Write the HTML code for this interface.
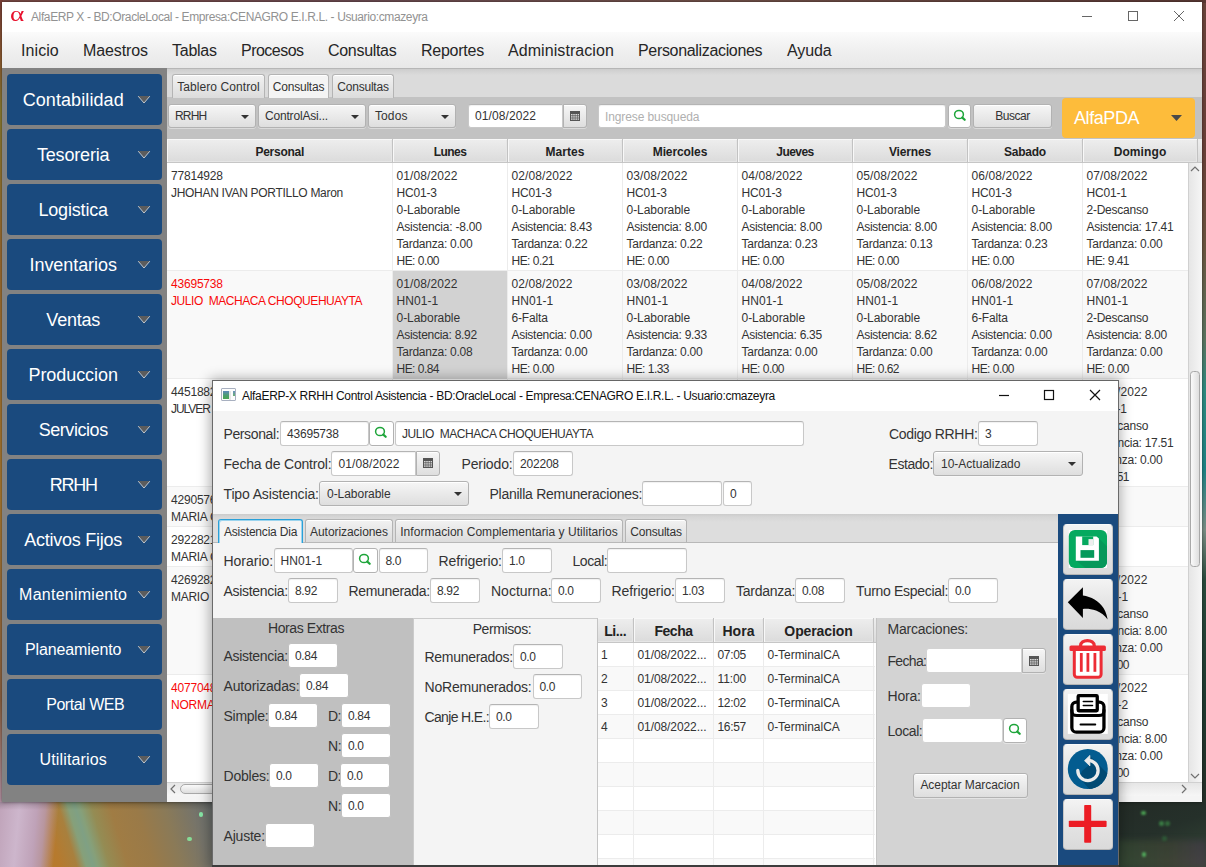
<!DOCTYPE html>
<html><head><meta charset="utf-8"><title>AlfaERP X</title>
<style>
html,body{margin:0;padding:0;}
body{width:1206px;height:867px;overflow:hidden;position:relative;background:#3a3a36;font-family:"Liberation Sans",sans-serif;}
div,svg.a{position:absolute;box-sizing:border-box;}
.t{white-space:pre;overflow:visible;}
.tf{background:#fff;border:1px solid #c8c8c8;border-top-color:#b4b4b4;border-radius:3px;box-shadow:inset 0 1px 1px rgba(0,0,0,.06);}
.btn{background:linear-gradient(#f6f6f6,#dedede);border:1px solid #b2b2b2;border-radius:3px;box-shadow:inset 0 1px 0 #fff,0 1px 0 rgba(255,255,255,.4);}
.sb{background:#1a4a7e;border-radius:4px;}
.hdr{background:linear-gradient(#eeeeee,#dbdbdb);border-right:1px solid #c2c2c2;border-bottom:1px solid #c6c6c6;box-shadow:inset 1px 1px 0 #f8f8f8,inset -1px -1px 0 #e6e6e6;}
</style></head><body>

<div style="left:0px;top:0px;width:1206px;height:867px;background:linear-gradient(180deg,#6a443c 0,#6a4038 150px,#6a5640 250px,#5a7460 340px,#2e8a80 390px,#1f8284 470px,#7a8c84 530px,#2a4a3c 580px,#1f3a30 700px,#263028 800px);"></div>
<div style="left:0px;top:0px;width:1206px;height:3px;background:linear-gradient(90deg,#7a4a44,#6a4a50 30%,#705048 60%,#5a3834);"></div>
<div style="left:0px;top:0px;width:3px;height:867px;background:linear-gradient(180deg,#7a4038 0,#8a5a30 60px,#8a7a30 110px,#9a6a30 250px,#a87830 500px,#8a6040 700px,#b090a0 800px);"></div>
<div style="left:0px;top:802px;width:214px;height:65px;background:linear-gradient(73deg,#b87828 0,#b67a2e 26%,#a8803e 33%,#86a07a 37%,#7fa084 40%,#86a07a 42%,#948c54 47%,#a07c44 55%,#9a7a48 66%,#8a7a58 78%,#76746a 90%,#666c6c 100%);"></div>
<div style="left:0px;top:802px;width:214px;height:65px;background:linear-gradient(95.4deg,#c0a4ba 0,#cdb6cc 9%,#bfa2b8 17%,#b8969e 21%,rgba(182,130,90,0) 27%);"></div>
<div style="left:0px;top:802px;width:214px;height:65px;background:linear-gradient(180deg,rgba(0,0,0,.18),rgba(0,0,0,0) 8px);"></div>
<div style="left:1118px;top:802px;width:88px;height:65px;background:linear-gradient(160deg,#232b26 0,#25302a 45%,#2c3a30 70%,#3c4438 100%);"></div>
<div style="left:1118px;top:840px;width:88px;height:27px;background:linear-gradient(90deg,rgba(70,100,60,.35),rgba(90,80,60,.3) 60%,rgba(90,60,100,.35));filter:blur(3px);"></div>
<div style="left:1141px;top:810.5px;width:4.5px;height:4.5px;background:#4fae58;border-radius:50%;opacity:0.9;filter:blur(1px);"></div>
<div style="left:1159px;top:821px;width:4.5px;height:4.5px;background:#3f8f4a;border-radius:50%;opacity:0.8;filter:blur(1px);"></div>
<div style="left:1165px;top:821px;width:4.5px;height:4.5px;background:#3a8444;border-radius:50%;opacity:0.7;filter:blur(1px);"></div>
<div style="left:1162px;top:836px;width:4.5px;height:4.5px;background:#2f6e3c;border-radius:50%;opacity:0.6;filter:blur(1px);"></div>
<div style="left:1141.5px;top:852px;width:4.5px;height:4.5px;background:#55b860;border-radius:50%;opacity:0.9;filter:blur(1px);"></div>
<div style="left:198.5px;top:812px;width:4.5px;height:4.5px;background:#86e6a6;border-radius:50%;filter:blur(.7px);"></div>
<div style="left:187px;top:836.5px;width:4.5px;height:4.5px;background:#86dc96;border-radius:50%;filter:blur(.7px);"></div>
<div style="left:2px;top:2px;width:1200px;height:800px;background:#fff;box-shadow:0 0 3px rgba(0,0,0,.5);"></div>
<div class="t" style="left:10.200px;top:2px;height:24px;line-height:24px;font-size:21px;color:#e8112d;transform:scaleX(1.3);transform-origin:0 0;font-family:'Liberation Serif',serif;">α</div>
<div class="t" style="left:31px;top:2px;height:30px;line-height:30px;font-size:12px;color:#929292;letter-spacing:-0.388px;">AlfaERP X - BD:OracleLocal - Empresa:CENAGRO E.I.R.L. - Usuario:cmazeyra</div>
<svg class="a" style="left:1076px;top:6px" width="120" height="22" viewBox="0 0 120 22"><g stroke="#666" stroke-width="1" fill="none"><path d="M6 10.5 H16"/><rect x="52.5" y="5.5" width="9" height="9"/><path d="M98 5 L108 15 M108 5 L98 15"/></g></svg>
<div style="left:2px;top:32px;width:1200px;height:36px;background:linear-gradient(#fbfbfb,#f5f5f5 25%,#eeeeee 60%,#e8e8e8);"></div>
<div class="t" style="left:21px;top:33px;height:36px;line-height:36px;font-size:16px;color:#262626;letter-spacing:0.079px;">Inicio</div>
<div class="t" style="left:83px;top:33px;height:36px;line-height:36px;font-size:16px;color:#262626;letter-spacing:-0.123px;">Maestros</div>
<div class="t" style="left:172px;top:33px;height:36px;line-height:36px;font-size:16px;color:#262626;letter-spacing:-0.253px;">Tablas</div>
<div class="t" style="left:241px;top:33px;height:36px;line-height:36px;font-size:16px;color:#262626;letter-spacing:-0.511px;">Procesos</div>
<div class="t" style="left:328px;top:33px;height:36px;line-height:36px;font-size:16px;color:#262626;letter-spacing:-0.305px;">Consultas</div>
<div class="t" style="left:421px;top:33px;height:36px;line-height:36px;font-size:16px;color:#262626;letter-spacing:-0.256px;">Reportes</div>
<div class="t" style="left:508px;top:33px;height:36px;line-height:36px;font-size:16px;color:#262626;letter-spacing:0.071px;">Administracion</div>
<div class="t" style="left:638px;top:33px;height:36px;line-height:36px;font-size:16px;color:#262626;letter-spacing:-0.330px;">Personalizaciones</div>
<div class="t" style="left:787px;top:33px;height:36px;line-height:36px;font-size:16px;color:#262626;letter-spacing:-0.083px;">Ayuda</div>
<div style="left:2px;top:68px;width:165px;height:734px;background:#828282;"></div>
<div class="sb" style="left:7px;top:74px;width:155px;height:51px;"></div>
<div class="t" style="left:22.6409px;top:75px;height:51px;line-height:51px;font-size:18px;color:#fff;letter-spacing:0.087px;">Contabilidad</div>
<svg class="a" style="left:137px;top:95px" width="14" height="10" viewBox="0 0 14 10"><path d="M1.500 1 H12.500 L7 7.500 Z" fill="#5c5c5c"/><path d="M1.200 1.200 L7 8 L12.800 1.200" fill="none" stroke="#cfcfcf" stroke-width=".95"/></svg>
<div class="sb" style="left:7px;top:129px;width:155px;height:51px;"></div>
<div class="t" style="left:36.9627px;top:130px;height:51px;line-height:51px;font-size:18px;color:#fff;letter-spacing:-0.173px;">Tesoreria</div>
<svg class="a" style="left:137px;top:150px" width="14" height="10" viewBox="0 0 14 10"><path d="M1.500 1 H12.500 L7 7.500 Z" fill="#5c5c5c"/><path d="M1.200 1.200 L7 8 L12.800 1.200" fill="none" stroke="#cfcfcf" stroke-width=".95"/></svg>
<div class="sb" style="left:7px;top:184px;width:155px;height:51px;"></div>
<div class="t" style="left:38.4349px;top:185px;height:51px;line-height:51px;font-size:18px;color:#fff;letter-spacing:-0.168px;">Logistica</div>
<svg class="a" style="left:137px;top:205px" width="14" height="10" viewBox="0 0 14 10"><path d="M1.500 1 H12.500 L7 7.500 Z" fill="#5c5c5c"/><path d="M1.200 1.200 L7 8 L12.800 1.200" fill="none" stroke="#cfcfcf" stroke-width=".95"/></svg>
<div class="sb" style="left:7px;top:239px;width:155px;height:51px;"></div>
<div class="t" style="left:29.5711px;top:240px;height:51px;line-height:51px;font-size:18px;color:#fff;letter-spacing:-0.072px;">Inventarios</div>
<svg class="a" style="left:137px;top:260px" width="14" height="10" viewBox="0 0 14 10"><path d="M1.500 1 H12.500 L7 7.500 Z" fill="#5c5c5c"/><path d="M1.200 1.200 L7 8 L12.800 1.200" fill="none" stroke="#cfcfcf" stroke-width=".95"/></svg>
<div class="sb" style="left:7px;top:294px;width:155px;height:51px;"></div>
<div class="t" style="left:46.3626px;top:295px;height:51px;line-height:51px;font-size:18px;color:#fff;letter-spacing:-0.229px;">Ventas</div>
<svg class="a" style="left:137px;top:315px" width="14" height="10" viewBox="0 0 14 10"><path d="M1.500 1 H12.500 L7 7.500 Z" fill="#5c5c5c"/><path d="M1.200 1.200 L7 8 L12.800 1.200" fill="none" stroke="#cfcfcf" stroke-width=".95"/></svg>
<div class="sb" style="left:7px;top:349px;width:155px;height:51px;"></div>
<div class="t" style="left:28.512px;top:350px;height:51px;line-height:51px;font-size:18px;color:#fff;letter-spacing:-0.068px;">Produccion</div>
<svg class="a" style="left:137px;top:370px" width="14" height="10" viewBox="0 0 14 10"><path d="M1.500 1 H12.500 L7 7.500 Z" fill="#5c5c5c"/><path d="M1.200 1.200 L7 8 L12.800 1.200" fill="none" stroke="#cfcfcf" stroke-width=".95"/></svg>
<div class="sb" style="left:7px;top:404px;width:155px;height:51px;"></div>
<div class="t" style="left:38.6678px;top:405px;height:51px;line-height:51px;font-size:18px;color:#fff;letter-spacing:-0.439px;">Servicios</div>
<svg class="a" style="left:137px;top:425px" width="14" height="10" viewBox="0 0 14 10"><path d="M1.500 1 H12.500 L7 7.500 Z" fill="#5c5c5c"/><path d="M1.200 1.200 L7 8 L12.800 1.200" fill="none" stroke="#cfcfcf" stroke-width=".95"/></svg>
<div class="sb" style="left:7px;top:459px;width:155px;height:51px;"></div>
<div class="t" style="left:49.6365px;top:460px;height:51px;line-height:51px;font-size:18px;color:#fff;letter-spacing:-1.217px;">RRHH</div>
<svg class="a" style="left:137px;top:480px" width="14" height="10" viewBox="0 0 14 10"><path d="M1.500 1 H12.500 L7 7.500 Z" fill="#5c5c5c"/><path d="M1.200 1.200 L7 8 L12.800 1.200" fill="none" stroke="#cfcfcf" stroke-width=".95"/></svg>
<div class="sb" style="left:7px;top:514px;width:155px;height:51px;"></div>
<div class="t" style="left:24.2977px;top:515px;height:51px;line-height:51px;font-size:18px;color:#fff;letter-spacing:-0.247px;">Activos Fijos</div>
<svg class="a" style="left:137px;top:535px" width="14" height="10" viewBox="0 0 14 10"><path d="M1.500 1 H12.500 L7 7.500 Z" fill="#5c5c5c"/><path d="M1.200 1.200 L7 8 L12.800 1.200" fill="none" stroke="#cfcfcf" stroke-width=".95"/></svg>
<div class="sb" style="left:7px;top:569px;width:155px;height:51px;"></div>
<div class="t" style="left:19.1219px;top:569px;height:51px;line-height:51px;font-size:16px;color:#fff;letter-spacing:0.247px;">Mantenimiento</div>
<svg class="a" style="left:137px;top:590px" width="14" height="10" viewBox="0 0 14 10"><path d="M1.500 1 H12.500 L7 7.500 Z" fill="#5c5c5c"/><path d="M1.200 1.200 L7 8 L12.800 1.200" fill="none" stroke="#cfcfcf" stroke-width=".95"/></svg>
<div class="sb" style="left:7px;top:624px;width:155px;height:51px;"></div>
<div class="t" style="left:24.993px;top:624px;height:51px;line-height:51px;font-size:16px;color:#fff;letter-spacing:-0.119px;">Planeamiento</div>
<svg class="a" style="left:137px;top:645px" width="14" height="10" viewBox="0 0 14 10"><path d="M1.500 1 H12.500 L7 7.500 Z" fill="#5c5c5c"/><path d="M1.200 1.200 L7 8 L12.800 1.200" fill="none" stroke="#cfcfcf" stroke-width=".95"/></svg>
<div class="sb" style="left:7px;top:679px;width:155px;height:51px;"></div>
<div class="t" style="left:46.2391px;top:679px;height:51px;line-height:51px;font-size:16px;color:#fff;letter-spacing:-0.477px;">Portal WEB</div>
<div class="sb" style="left:7px;top:734px;width:155px;height:51px;"></div>
<div class="t" style="left:39.5984px;top:734px;height:51px;line-height:51px;font-size:16px;color:#fff;letter-spacing:0.129px;">Utilitarios</div>
<svg class="a" style="left:137px;top:755px" width="14" height="10" viewBox="0 0 14 10"><path d="M1.500 1 H12.500 L7 7.500 Z" fill="#5c5c5c"/><path d="M1.200 1.200 L7 8 L12.800 1.200" fill="none" stroke="#cfcfcf" stroke-width=".95"/></svg>
<div style="left:167px;top:68px;width:1035px;height:30px;background:linear-gradient(#b4b4b4 0,#b8b8b8 1px,#cecece 1.500px,#dbdbdb 7px,#dbdbdb);"></div>
<div style="left:167px;top:97px;width:1035px;height:42px;background:#c2c2c2;"></div>
<div style="left:172px;top:74px;width:93px;height:24px;background:linear-gradient(#f2f2f2,#dcdcdc);border:1px solid #b4b4b4;border-bottom:none;border-radius:3px 3px 0 0;box-shadow:inset 0 1px 0 #fff;"></div>
<div class="t" style="left:172px;top:76px;height:23px;line-height:23px;font-size:12px;color:#333;letter-spacing:0.078px;width:93px;text-align:center;">Tablero Control</div>
<div style="left:268px;top:74px;width:61px;height:24px;background:#f4f4f4;border:1px solid #b4b4b4;border-bottom:none;border-radius:3px 3px 0 0;box-shadow:inset 0 1px 0 #fff;"></div>
<div class="t" style="left:268px;top:76px;height:23px;line-height:23px;font-size:12px;color:#333;letter-spacing:-0.228px;width:61px;text-align:center;">Consultas</div>
<div style="left:332px;top:74px;width:62px;height:24px;background:linear-gradient(#f2f2f2,#dcdcdc);border:1px solid #b4b4b4;border-bottom:none;border-radius:3px 3px 0 0;box-shadow:inset 0 1px 0 #fff;"></div>
<div class="t" style="left:332px;top:76px;height:23px;line-height:23px;font-size:12px;color:#333;letter-spacing:-0.228px;width:62px;text-align:center;">Consultas</div>
<div class="btn" style="left:167.5px;top:104px;width:88.5px;height:24px;"></div>
<div class="t" style="left:175px;top:104px;height:24px;line-height:24px;font-size:12px;color:#333;letter-spacing:-0.811px;">RRHH</div>
<svg class="a" style="left:240.5px;top:114.5px" width="8" height="4" viewBox="0 0 8 4"><path d="M0 0 H8 L4.0 4 Z" fill="#333"/></svg>
<div class="btn" style="left:258px;top:104px;width:108px;height:24px;"></div>
<div class="t" style="left:265px;top:104px;height:24px;line-height:24px;font-size:12px;color:#333;letter-spacing:-0.184px;">ControlAsi...</div>
<svg class="a" style="left:350.5px;top:114.5px" width="8" height="4" viewBox="0 0 8 4"><path d="M0 0 H8 L4.0 4 Z" fill="#333"/></svg>
<div class="btn" style="left:368px;top:104px;width:88px;height:24px;"></div>
<div class="t" style="left:375px;top:104px;height:24px;line-height:24px;font-size:12px;color:#333;letter-spacing:0.095px;">Todos</div>
<svg class="a" style="left:440.5px;top:114.5px" width="8" height="4" viewBox="0 0 8 4"><path d="M0 0 H8 L4.0 4 Z" fill="#333"/></svg>
<div class="tf" style="left:467.5px;top:104px;width:95px;height:24px;border-radius:3px 0 0 3px;"></div>
<div class="btn" style="left:562.5px;top:104px;width:24px;height:24px;border-radius:0 3px 3px 0;"></div>
<svg class="a" style="left:569.5px;top:111px" width="10" height="10" viewBox="0 0 10 10"><rect x="0" y="0" width="10" height="10" fill="#555"/><g fill="#d8d8d8"><rect x="1" y="3" width="1.6" height="1.4"/><rect x="3.2" y="3" width="1.6" height="1.4"/><rect x="5.4" y="3" width="1.6" height="1.4"/><rect x="7.6" y="3" width="1.4" height="1.4"/><rect x="1" y="5.2" width="1.6" height="1.4"/><rect x="3.2" y="5.2" width="1.6" height="1.4"/><rect x="5.4" y="5.2" width="1.6" height="1.4"/><rect x="7.6" y="5.2" width="1.4" height="1.4"/><rect x="1" y="7.4" width="1.6" height="1.4"/><rect x="3.2" y="7.4" width="1.6" height="1.4"/><rect x="5.4" y="7.4" width="1.6" height="1.4"/><rect x="7.6" y="7.4" width="1.4" height="1.4"/></g></svg>
<div class="t" style="left:475px;top:104.3px;height:24px;line-height:24px;font-size:12px;color:#333;letter-spacing:0.103px;">01/08/2022</div>
<div class="tf" style="left:598px;top:104px;width:348px;height:24px;"></div>
<div class="t" style="left:605px;top:105px;height:24px;line-height:24px;font-size:12px;color:#b0b0b0;letter-spacing:-0.107px;">Ingrese busqueda</div>
<div class="btn" style="left:948px;top:104px;width:23px;height:24px;background:#fff;"></div>
<svg class="a" style="left:948px;top:104px" width="25" height="25" viewBox="0 0 25 25"><ellipse cx="11" cy="10.500" rx="4.400" ry="4.100" fill="none" stroke="#1ea53a" stroke-width="1.500"/><path d="M14.300 13.600 L16.700 15.800" stroke="#1ea53a" stroke-width="2.200" stroke-linecap="round"/></svg>
<div class="btn" style="left:973px;top:104px;width:79px;height:24px;"></div>
<div class="t" style="left:973px;top:104px;height:24px;line-height:24px;font-size:12px;color:#333;letter-spacing:-0.461px;width:79px;text-align:center;">Buscar</div>
<div style="left:1062px;top:98px;width:133px;height:40px;background:#fdbc3b;border-radius:4px;"></div>
<div class="t" style="left:1074px;top:98px;height:40px;line-height:40px;font-size:18px;color:#fff;letter-spacing:-0.422px;">AlfaPDA</div>
<svg class="a" style="left:1171px;top:115px" width="11" height="6" viewBox="0 0 11 6"><path d="M0 0 H11 L5.5 6 Z" fill="#4a4a4a"/></svg>
<div style="left:167px;top:139px;width:1035px;height:663px;background:#fff;"></div>
<div style="left:167px;top:139px;width:1035px;height:24px;background:linear-gradient(#eeeeee,#dbdbdb);border-bottom:1px solid #c6c6c6;"></div>
<div class="hdr" style="left:167px;top:139px;width:225.5px;height:24px;"></div>
<div class="t" style="left:167px;top:140px;height:24px;line-height:24px;font-size:12px;color:#222;letter-spacing:-0.257px;font-weight:bold;width:225.5px;text-align:center;">Personal</div>
<div class="hdr" style="left:392.5px;top:139px;width:115px;height:24px;"></div>
<div class="t" style="left:392.5px;top:140px;height:24px;line-height:24px;font-size:12px;color:#222;letter-spacing:-0.522px;font-weight:bold;width:115px;text-align:center;">Lunes</div>
<div class="hdr" style="left:507.5px;top:139px;width:115px;height:24px;"></div>
<div class="t" style="left:507.5px;top:140px;height:24px;line-height:24px;font-size:12px;color:#222;letter-spacing:0.062px;font-weight:bold;width:115px;text-align:center;">Martes</div>
<div class="hdr" style="left:622.5px;top:139px;width:115px;height:24px;"></div>
<div class="t" style="left:622.5px;top:140px;height:24px;line-height:24px;font-size:12px;color:#222;letter-spacing:-0.089px;font-weight:bold;width:115px;text-align:center;">Miercoles</div>
<div class="hdr" style="left:737.5px;top:139px;width:115px;height:24px;"></div>
<div class="t" style="left:737.5px;top:140px;height:24px;line-height:24px;font-size:12px;color:#222;letter-spacing:-0.543px;font-weight:bold;width:115px;text-align:center;">Jueves</div>
<div class="hdr" style="left:852.5px;top:139px;width:115px;height:24px;"></div>
<div class="t" style="left:852.5px;top:140px;height:24px;line-height:24px;font-size:12px;color:#222;letter-spacing:-0.146px;font-weight:bold;width:115px;text-align:center;">Viernes</div>
<div class="hdr" style="left:967.5px;top:139px;width:115px;height:24px;"></div>
<div class="t" style="left:967.5px;top:140px;height:24px;line-height:24px;font-size:12px;color:#222;letter-spacing:-0.251px;font-weight:bold;width:115px;text-align:center;">Sabado</div>
<div class="hdr" style="left:1082.5px;top:139px;width:115px;height:24px;"></div>
<div class="t" style="left:1082.5px;top:140px;height:24px;line-height:24px;font-size:12px;color:#222;letter-spacing:0.097px;font-weight:bold;width:115px;text-align:center;">Domingo</div>
<div style="left:167px;top:163px;width:1021px;height:108px;background:#fff;border-bottom:1px solid #ececec;"></div>
<div class="t" style="left:171px;top:168px;height:17px;line-height:17px;font-size:12px;color:#333;letter-spacing:-0.205px;">77814928</div>
<div class="t" style="left:171px;top:185px;height:17px;line-height:17px;font-size:12px;color:#333;letter-spacing:-0.294px;">JHOHAN IVAN PORTILLO Maron</div>
<div class="t" style="left:396.5px;top:168px;height:17px;line-height:17px;font-size:12px;color:#333;letter-spacing:0.103px;">01/08/2022</div>
<div class="t" style="left:396.5px;top:185px;height:17px;line-height:17px;font-size:12px;color:#333;letter-spacing:-0.198px;">HC01-3</div>
<div class="t" style="left:396.5px;top:202px;height:17px;line-height:17px;font-size:12px;color:#333;letter-spacing:-0.038px;">0-Laborable</div>
<div class="t" style="left:396.5px;top:219px;height:17px;line-height:17px;font-size:12px;color:#333;letter-spacing:-0.205px;">Asistencia: -8.00</div>
<div class="t" style="left:396.5px;top:236px;height:17px;line-height:17px;font-size:12px;color:#333;letter-spacing:-0.246px;">Tardanza: 0.00</div>
<div class="t" style="left:396.5px;top:253px;height:17px;line-height:17px;font-size:12px;color:#333;letter-spacing:-0.526px;">HE: 0.00</div>
<div class="t" style="left:511.5px;top:168px;height:17px;line-height:17px;font-size:12px;color:#333;letter-spacing:0.103px;">02/08/2022</div>
<div class="t" style="left:511.5px;top:185px;height:17px;line-height:17px;font-size:12px;color:#333;letter-spacing:-0.198px;">HC01-3</div>
<div class="t" style="left:511.5px;top:202px;height:17px;line-height:17px;font-size:12px;color:#333;letter-spacing:-0.038px;">0-Laborable</div>
<div class="t" style="left:511.5px;top:219px;height:17px;line-height:17px;font-size:12px;color:#333;letter-spacing:-0.269px;">Asistencia: 8.43</div>
<div class="t" style="left:511.5px;top:236px;height:17px;line-height:17px;font-size:12px;color:#333;letter-spacing:-0.246px;">Tardanza: 0.22</div>
<div class="t" style="left:511.5px;top:253px;height:17px;line-height:17px;font-size:12px;color:#333;letter-spacing:-0.526px;">HE: 0.21</div>
<div class="t" style="left:626.5px;top:168px;height:17px;line-height:17px;font-size:12px;color:#333;letter-spacing:0.103px;">03/08/2022</div>
<div class="t" style="left:626.5px;top:185px;height:17px;line-height:17px;font-size:12px;color:#333;letter-spacing:-0.198px;">HC01-3</div>
<div class="t" style="left:626.5px;top:202px;height:17px;line-height:17px;font-size:12px;color:#333;letter-spacing:-0.038px;">0-Laborable</div>
<div class="t" style="left:626.5px;top:219px;height:17px;line-height:17px;font-size:12px;color:#333;letter-spacing:-0.269px;">Asistencia: 8.00</div>
<div class="t" style="left:626.5px;top:236px;height:17px;line-height:17px;font-size:12px;color:#333;letter-spacing:-0.246px;">Tardanza: 0.22</div>
<div class="t" style="left:626.5px;top:253px;height:17px;line-height:17px;font-size:12px;color:#333;letter-spacing:-0.526px;">HE: 0.00</div>
<div class="t" style="left:741.5px;top:168px;height:17px;line-height:17px;font-size:12px;color:#333;letter-spacing:0.103px;">04/08/2022</div>
<div class="t" style="left:741.5px;top:185px;height:17px;line-height:17px;font-size:12px;color:#333;letter-spacing:-0.198px;">HC01-3</div>
<div class="t" style="left:741.5px;top:202px;height:17px;line-height:17px;font-size:12px;color:#333;letter-spacing:-0.038px;">0-Laborable</div>
<div class="t" style="left:741.5px;top:219px;height:17px;line-height:17px;font-size:12px;color:#333;letter-spacing:-0.269px;">Asistencia: 8.00</div>
<div class="t" style="left:741.5px;top:236px;height:17px;line-height:17px;font-size:12px;color:#333;letter-spacing:-0.246px;">Tardanza: 0.23</div>
<div class="t" style="left:741.5px;top:253px;height:17px;line-height:17px;font-size:12px;color:#333;letter-spacing:-0.526px;">HE: 0.00</div>
<div class="t" style="left:856.5px;top:168px;height:17px;line-height:17px;font-size:12px;color:#333;letter-spacing:0.103px;">05/08/2022</div>
<div class="t" style="left:856.5px;top:185px;height:17px;line-height:17px;font-size:12px;color:#333;letter-spacing:-0.198px;">HC01-3</div>
<div class="t" style="left:856.5px;top:202px;height:17px;line-height:17px;font-size:12px;color:#333;letter-spacing:-0.038px;">0-Laborable</div>
<div class="t" style="left:856.5px;top:219px;height:17px;line-height:17px;font-size:12px;color:#333;letter-spacing:-0.269px;">Asistencia: 8.00</div>
<div class="t" style="left:856.5px;top:236px;height:17px;line-height:17px;font-size:12px;color:#333;letter-spacing:-0.246px;">Tardanza: 0.13</div>
<div class="t" style="left:856.5px;top:253px;height:17px;line-height:17px;font-size:12px;color:#333;letter-spacing:-0.526px;">HE: 0.00</div>
<div class="t" style="left:971.5px;top:168px;height:17px;line-height:17px;font-size:12px;color:#333;letter-spacing:0.103px;">06/08/2022</div>
<div class="t" style="left:971.5px;top:185px;height:17px;line-height:17px;font-size:12px;color:#333;letter-spacing:-0.198px;">HC01-3</div>
<div class="t" style="left:971.5px;top:202px;height:17px;line-height:17px;font-size:12px;color:#333;letter-spacing:-0.038px;">0-Laborable</div>
<div class="t" style="left:971.5px;top:219px;height:17px;line-height:17px;font-size:12px;color:#333;letter-spacing:-0.269px;">Asistencia: 8.00</div>
<div class="t" style="left:971.5px;top:236px;height:17px;line-height:17px;font-size:12px;color:#333;letter-spacing:-0.246px;">Tardanza: 0.23</div>
<div class="t" style="left:971.5px;top:253px;height:17px;line-height:17px;font-size:12px;color:#333;letter-spacing:-0.526px;">HE: 0.00</div>
<div class="t" style="left:1086.5px;top:168px;height:17px;line-height:17px;font-size:12px;color:#333;letter-spacing:0.103px;">07/08/2022</div>
<div class="t" style="left:1086.5px;top:185px;height:17px;line-height:17px;font-size:12px;color:#333;letter-spacing:-0.198px;">HC01-1</div>
<div class="t" style="left:1086.5px;top:202px;height:17px;line-height:17px;font-size:12px;color:#333;letter-spacing:-0.241px;">2-Descanso</div>
<div class="t" style="left:1086.5px;top:219px;height:17px;line-height:17px;font-size:12px;color:#333;letter-spacing:-0.265px;">Asistencia: 17.41</div>
<div class="t" style="left:1086.5px;top:236px;height:17px;line-height:17px;font-size:12px;color:#333;letter-spacing:-0.246px;">Tardanza: 0.00</div>
<div class="t" style="left:1086.5px;top:253px;height:17px;line-height:17px;font-size:12px;color:#333;letter-spacing:-0.526px;">HE: 9.41</div>
<div style="left:167px;top:271px;width:1021px;height:108px;background:#f9f9f9;border-bottom:1px solid #ececec;"></div>
<div class="t" style="left:171px;top:276px;height:17px;line-height:17px;font-size:12px;color:#f80a0a;letter-spacing:-0.205px;">43695738</div>
<div class="t" style="left:171px;top:293px;height:17px;line-height:17px;font-size:12px;color:#f80a0a;letter-spacing:-0.435px;">JULIO &nbsp;MACHACA CHOQUEHUAYTA</div>
<div style="left:392.5px;top:271px;width:115px;height:108px;background:#d2d2d2;"></div>
<div class="t" style="left:396.5px;top:276px;height:17px;line-height:17px;font-size:12px;color:#333;letter-spacing:0.103px;">01/08/2022</div>
<div class="t" style="left:396.5px;top:293px;height:17px;line-height:17px;font-size:12px;color:#333;letter-spacing:0.060px;">HN01-1</div>
<div class="t" style="left:396.5px;top:310px;height:17px;line-height:17px;font-size:12px;color:#333;letter-spacing:-0.038px;">0-Laborable</div>
<div class="t" style="left:396.5px;top:327px;height:17px;line-height:17px;font-size:12px;color:#333;letter-spacing:-0.269px;">Asistencia: 8.92</div>
<div class="t" style="left:396.5px;top:344px;height:17px;line-height:17px;font-size:12px;color:#333;letter-spacing:-0.246px;">Tardanza: 0.08</div>
<div class="t" style="left:396.5px;top:361px;height:17px;line-height:17px;font-size:12px;color:#333;letter-spacing:-0.526px;">HE: 0.84</div>
<div class="t" style="left:511.5px;top:276px;height:17px;line-height:17px;font-size:12px;color:#333;letter-spacing:0.103px;">02/08/2022</div>
<div class="t" style="left:511.5px;top:293px;height:17px;line-height:17px;font-size:12px;color:#333;letter-spacing:0.060px;">HN01-1</div>
<div class="t" style="left:511.5px;top:310px;height:17px;line-height:17px;font-size:12px;color:#333;letter-spacing:-0.148px;">6-Falta</div>
<div class="t" style="left:511.5px;top:327px;height:17px;line-height:17px;font-size:12px;color:#333;letter-spacing:-0.269px;">Asistencia: 0.00</div>
<div class="t" style="left:511.5px;top:344px;height:17px;line-height:17px;font-size:12px;color:#333;letter-spacing:-0.246px;">Tardanza: 0.00</div>
<div class="t" style="left:511.5px;top:361px;height:17px;line-height:17px;font-size:12px;color:#333;letter-spacing:-0.526px;">HE: 0.00</div>
<div class="t" style="left:626.5px;top:276px;height:17px;line-height:17px;font-size:12px;color:#333;letter-spacing:0.103px;">03/08/2022</div>
<div class="t" style="left:626.5px;top:293px;height:17px;line-height:17px;font-size:12px;color:#333;letter-spacing:0.060px;">HN01-1</div>
<div class="t" style="left:626.5px;top:310px;height:17px;line-height:17px;font-size:12px;color:#333;letter-spacing:-0.038px;">0-Laborable</div>
<div class="t" style="left:626.5px;top:327px;height:17px;line-height:17px;font-size:12px;color:#333;letter-spacing:-0.269px;">Asistencia: 9.33</div>
<div class="t" style="left:626.5px;top:344px;height:17px;line-height:17px;font-size:12px;color:#333;letter-spacing:-0.246px;">Tardanza: 0.00</div>
<div class="t" style="left:626.5px;top:361px;height:17px;line-height:17px;font-size:12px;color:#333;letter-spacing:-0.526px;">HE: 1.33</div>
<div class="t" style="left:741.5px;top:276px;height:17px;line-height:17px;font-size:12px;color:#333;letter-spacing:0.103px;">04/08/2022</div>
<div class="t" style="left:741.5px;top:293px;height:17px;line-height:17px;font-size:12px;color:#333;letter-spacing:0.060px;">HN01-1</div>
<div class="t" style="left:741.5px;top:310px;height:17px;line-height:17px;font-size:12px;color:#333;letter-spacing:-0.038px;">0-Laborable</div>
<div class="t" style="left:741.5px;top:327px;height:17px;line-height:17px;font-size:12px;color:#333;letter-spacing:-0.269px;">Asistencia: 6.35</div>
<div class="t" style="left:741.5px;top:344px;height:17px;line-height:17px;font-size:12px;color:#333;letter-spacing:-0.246px;">Tardanza: 0.00</div>
<div class="t" style="left:741.5px;top:361px;height:17px;line-height:17px;font-size:12px;color:#333;letter-spacing:-0.526px;">HE: 0.00</div>
<div class="t" style="left:856.5px;top:276px;height:17px;line-height:17px;font-size:12px;color:#333;letter-spacing:0.103px;">05/08/2022</div>
<div class="t" style="left:856.5px;top:293px;height:17px;line-height:17px;font-size:12px;color:#333;letter-spacing:0.060px;">HN01-1</div>
<div class="t" style="left:856.5px;top:310px;height:17px;line-height:17px;font-size:12px;color:#333;letter-spacing:-0.038px;">0-Laborable</div>
<div class="t" style="left:856.5px;top:327px;height:17px;line-height:17px;font-size:12px;color:#333;letter-spacing:-0.269px;">Asistencia: 8.62</div>
<div class="t" style="left:856.5px;top:344px;height:17px;line-height:17px;font-size:12px;color:#333;letter-spacing:-0.246px;">Tardanza: 0.00</div>
<div class="t" style="left:856.5px;top:361px;height:17px;line-height:17px;font-size:12px;color:#333;letter-spacing:-0.526px;">HE: 0.62</div>
<div class="t" style="left:971.5px;top:276px;height:17px;line-height:17px;font-size:12px;color:#333;letter-spacing:0.103px;">06/08/2022</div>
<div class="t" style="left:971.5px;top:293px;height:17px;line-height:17px;font-size:12px;color:#333;letter-spacing:0.060px;">HN01-1</div>
<div class="t" style="left:971.5px;top:310px;height:17px;line-height:17px;font-size:12px;color:#333;letter-spacing:-0.148px;">6-Falta</div>
<div class="t" style="left:971.5px;top:327px;height:17px;line-height:17px;font-size:12px;color:#333;letter-spacing:-0.269px;">Asistencia: 0.00</div>
<div class="t" style="left:971.5px;top:344px;height:17px;line-height:17px;font-size:12px;color:#333;letter-spacing:-0.246px;">Tardanza: 0.00</div>
<div class="t" style="left:971.5px;top:361px;height:17px;line-height:17px;font-size:12px;color:#333;letter-spacing:-0.526px;">HE: 0.00</div>
<div class="t" style="left:1086.5px;top:276px;height:17px;line-height:17px;font-size:12px;color:#333;letter-spacing:0.103px;">07/08/2022</div>
<div class="t" style="left:1086.5px;top:293px;height:17px;line-height:17px;font-size:12px;color:#333;letter-spacing:0.060px;">HN01-1</div>
<div class="t" style="left:1086.5px;top:310px;height:17px;line-height:17px;font-size:12px;color:#333;letter-spacing:-0.241px;">2-Descanso</div>
<div class="t" style="left:1086.5px;top:327px;height:17px;line-height:17px;font-size:12px;color:#333;letter-spacing:-0.269px;">Asistencia: 8.00</div>
<div class="t" style="left:1086.5px;top:344px;height:17px;line-height:17px;font-size:12px;color:#333;letter-spacing:-0.246px;">Tardanza: 0.00</div>
<div class="t" style="left:1086.5px;top:361px;height:17px;line-height:17px;font-size:12px;color:#333;letter-spacing:-0.526px;">HE: 0.00</div>
<div style="left:167px;top:379px;width:1021px;height:108px;background:#fff;border-bottom:1px solid #ececec;"></div>
<div class="t" style="left:171px;top:384px;height:17px;line-height:17px;font-size:12px;color:#333;letter-spacing:-0.205px;">44518827</div>
<div class="t" style="left:171px;top:401px;height:17px;line-height:17px;font-size:12px;color:#333;letter-spacing:-1.039px;">JULVER</div>
<div class="t" style="left:1086.5px;top:384px;height:17px;line-height:17px;font-size:12px;color:#333;letter-spacing:0.103px;">07/08/2022</div>
<div class="t" style="left:1086.5px;top:401px;height:17px;line-height:17px;font-size:12px;color:#333;letter-spacing:-0.198px;">HC01-1</div>
<div class="t" style="left:1086.5px;top:418px;height:17px;line-height:17px;font-size:12px;color:#333;letter-spacing:-0.241px;">2-Descanso</div>
<div class="t" style="left:1086.5px;top:435px;height:17px;line-height:17px;font-size:12px;color:#333;letter-spacing:-0.265px;">Asistencia: 17.51</div>
<div class="t" style="left:1086.5px;top:452px;height:17px;line-height:17px;font-size:12px;color:#333;letter-spacing:-0.246px;">Tardanza: 0.00</div>
<div class="t" style="left:1086.5px;top:469px;height:17px;line-height:17px;font-size:12px;color:#333;letter-spacing:-0.526px;">HE: 9.51</div>
<div style="left:167px;top:487px;width:1021px;height:40px;background:#f9f9f9;border-bottom:1px solid #ececec;"></div>
<div class="t" style="left:171px;top:492px;height:17px;line-height:17px;font-size:12px;color:#333;letter-spacing:-0.205px;">42905760</div>
<div class="t" style="left:171px;top:509px;height:17px;line-height:17px;font-size:12px;color:#333;letter-spacing:-0.284px;">MARIA C</div>
<div style="left:167px;top:527px;width:1021px;height:40px;background:#fff;border-bottom:1px solid #ececec;"></div>
<div class="t" style="left:171px;top:532px;height:17px;line-height:17px;font-size:12px;color:#333;letter-spacing:-0.205px;">29228210</div>
<div class="t" style="left:171px;top:549px;height:17px;line-height:17px;font-size:12px;color:#333;letter-spacing:-0.284px;">MARIA C</div>
<div style="left:167px;top:567px;width:1021px;height:108px;background:#f9f9f9;border-bottom:1px solid #ececec;"></div>
<div class="t" style="left:171px;top:572px;height:17px;line-height:17px;font-size:12px;color:#333;letter-spacing:-0.205px;">42692820</div>
<div class="t" style="left:171px;top:589px;height:17px;line-height:17px;font-size:12px;color:#333;letter-spacing:-0.278px;">MARIO</div>
<div class="t" style="left:1086.5px;top:572px;height:17px;line-height:17px;font-size:12px;color:#333;letter-spacing:0.103px;">07/08/2022</div>
<div class="t" style="left:1086.5px;top:589px;height:17px;line-height:17px;font-size:12px;color:#333;letter-spacing:0.060px;">HN01-1</div>
<div class="t" style="left:1086.5px;top:606px;height:17px;line-height:17px;font-size:12px;color:#333;letter-spacing:-0.241px;">2-Descanso</div>
<div class="t" style="left:1086.5px;top:623px;height:17px;line-height:17px;font-size:12px;color:#333;letter-spacing:-0.269px;">Asistencia: 8.00</div>
<div class="t" style="left:1086.5px;top:640px;height:17px;line-height:17px;font-size:12px;color:#333;letter-spacing:-0.246px;">Tardanza: 0.00</div>
<div class="t" style="left:1086.5px;top:657px;height:17px;line-height:17px;font-size:12px;color:#333;letter-spacing:-0.526px;">HE: 0.00</div>
<div style="left:167px;top:675px;width:1021px;height:108px;background:#fff;border-bottom:1px solid #ececec;"></div>
<div class="t" style="left:171px;top:680px;height:17px;line-height:17px;font-size:12px;color:#f80a0a;letter-spacing:-0.205px;">40770480</div>
<div class="t" style="left:171px;top:697px;height:17px;line-height:17px;font-size:12px;color:#f80a0a;letter-spacing:-0.188px;">NORMA</div>
<div class="t" style="left:1086.5px;top:680px;height:17px;line-height:17px;font-size:12px;color:#333;letter-spacing:0.103px;">07/08/2022</div>
<div class="t" style="left:1086.5px;top:697px;height:17px;line-height:17px;font-size:12px;color:#333;letter-spacing:0.060px;">HN01-2</div>
<div class="t" style="left:1086.5px;top:714px;height:17px;line-height:17px;font-size:12px;color:#333;letter-spacing:-0.241px;">2-Descanso</div>
<div class="t" style="left:1086.5px;top:731px;height:17px;line-height:17px;font-size:12px;color:#333;letter-spacing:-0.269px;">Asistencia: 8.00</div>
<div class="t" style="left:1086.5px;top:748px;height:17px;line-height:17px;font-size:12px;color:#333;letter-spacing:-0.246px;">Tardanza: 0.00</div>
<div class="t" style="left:1086.5px;top:765px;height:17px;line-height:17px;font-size:12px;color:#333;letter-spacing:-0.526px;">HE: 0.00</div>
<div style="left:392px;top:163px;width:1px;height:620px;background:#ececec;"></div>
<div style="left:507px;top:163px;width:1px;height:620px;background:#ececec;"></div>
<div style="left:622px;top:163px;width:1px;height:620px;background:#ececec;"></div>
<div style="left:737px;top:163px;width:1px;height:620px;background:#ececec;"></div>
<div style="left:852px;top:163px;width:1px;height:620px;background:#ececec;"></div>
<div style="left:967px;top:163px;width:1px;height:620px;background:#ececec;"></div>
<div style="left:1082px;top:163px;width:1px;height:620px;background:#ececec;"></div>
<div style="left:1187.5px;top:163px;width:1px;height:620px;background:#e0e0e0;"></div>
<div style="left:1188px;top:163px;width:14px;height:620px;background:linear-gradient(90deg,#e6e6e6,#f6f6f6);border-left:1px solid #d0d0d0;"></div>
<div style="left:1190px;top:371px;width:10px;height:196px;background:linear-gradient(90deg,#fafafa,#dedede);border:1px solid #a8a8a8;border-radius:3.500px;"></div>
<svg class="a" style="left:1190px;top:166px" width="10" height="6" viewBox="0 0 10 6"><path d="M1 5 L5 1 L9 5" fill="none" stroke="#707070" stroke-width="1.2"/></svg>
<svg class="a" style="left:1190px;top:773px" width="10" height="6" viewBox="0 0 10 6"><path d="M1 1 L5 5 L9 1" fill="none" stroke="#707070" stroke-width="1.2"/></svg>
<div style="left:167px;top:782px;width:1035px;height:14px;background:linear-gradient(#e6e6e6,#f6f6f6);border-top:1px solid #d0d0d0;"></div>
<div style="left:180px;top:784px;width:900px;height:10px;background:linear-gradient(#fafafa,#dedede);border:1px solid #a8a8a8;border-radius:5px;"></div>
<svg class="a" style="left:170px;top:784px" width="6" height="10" viewBox="0 0 6 10"><path d="M5 1 L1 5 L5 9" fill="none" stroke="#707070" stroke-width="1.2"/></svg>
<svg class="a" style="left:1181px;top:784px" width="6" height="10" viewBox="0 0 6 10"><path d="M1 1 L5 5 L1 9" fill="none" stroke="#707070" stroke-width="1.2"/></svg>
<div style="left:167px;top:796px;width:1035px;height:6px;background:#f4f4f4;"></div>
<div style="left:212px;top:380px;width:906px;height:487px;background:#f4f4f4;box-shadow:0 1px 12px 2px rgba(0,0,0,.33);border-top:1px solid #666;border-left:1px solid #6a6a6a;"></div>
<div style="left:213px;top:381px;width:905px;height:30px;background:#fff;"></div>
<div style="left:221px;top:388px;width:15px;height:13px;background:#fdfdfd;border:1px solid #a8b0c0;border-radius:1px;"></div>
<div style="left:223px;top:391px;width:5.5px;height:8px;background:linear-gradient(#5c88ba,#4a9e6a 60%,#48a452);"></div>
<div style="left:229.2px;top:390.5px;width:2.3px;height:9px;background:#e6e6e6;"></div>
<div style="left:232.8px;top:391px;width:2.2px;height:4.5px;background:linear-gradient(#6a90c0,#6ab070);"></div>
<div class="t" style="left:242px;top:381px;height:30px;line-height:30px;font-size:12px;color:#111;letter-spacing:-0.311px;">AlfaERP-X RRHH Control Asistencia - BD:OracleLocal - Empresa:CENAGRO E.I.R.L. - Usuario:cmazeyra</div>
<svg class="a" style="left:990px;top:384px" width="120" height="22" viewBox="0 0 120 22"><g stroke="#111" stroke-width="1.2" fill="none"><path d="M9 11.5 H19"/><rect x="54.5" y="6.5" width="9" height="9"/><path d="M100 6 L110 16 M110 6 L100 16"/></g></svg>
<div class="t" style="left:223.5px;top:422px;height:24px;line-height:24px;font-size:14px;color:#333;letter-spacing:-0.389px;">Personal:</div>
<div class="tf" style="left:280px;top:421px;width:89px;height:25px;"></div>
<div class="t" style="left:287px;top:422px;height:24px;line-height:24px;font-size:12px;color:#333;letter-spacing:-0.205px;">43695738</div>
<div class="btn" style="left:369px;top:421px;width:25px;height:25px;background:#fff;"></div>
<svg class="a" style="left:369px;top:421px" width="25" height="25" viewBox="0 0 25 25"><ellipse cx="11" cy="10.500" rx="4.400" ry="4.100" fill="none" stroke="#1ea53a" stroke-width="1.500"/><path d="M14.300 13.600 L16.700 15.800" stroke="#1ea53a" stroke-width="2.200" stroke-linecap="round"/></svg>
<div class="tf" style="left:395px;top:421px;width:409px;height:25px;"></div>
<div class="t" style="left:402px;top:422px;height:24px;line-height:24px;font-size:12px;color:#333;letter-spacing:-0.435px;">JULIO &nbsp;MACHACA CHOQUEHUAYTA</div>
<div class="t" style="left:889px;top:422px;height:24px;line-height:24px;font-size:14px;color:#333;letter-spacing:-0.345px;">Codigo RRHH:</div>
<div class="tf" style="left:978px;top:421px;width:60px;height:25px;"></div>
<div class="t" style="left:985px;top:422px;height:24px;line-height:24px;font-size:12px;color:#333;letter-spacing:-0.205px;">3</div>
<div class="t" style="left:223.5px;top:452px;height:24px;line-height:24px;font-size:14px;color:#333;letter-spacing:-0.198px;">Fecha de Control:</div>
<div class="tf" style="left:331px;top:451px;width:85px;height:25px;border-radius:3px 0 0 3px;"></div>
<div class="btn" style="left:416px;top:451px;width:24px;height:25px;border-radius:0 3px 3px 0;"></div>
<svg class="a" style="left:423px;top:458px" width="10" height="10" viewBox="0 0 10 10"><rect x="0" y="0" width="10" height="10" fill="#555"/><g fill="#d8d8d8"><rect x="1" y="3" width="1.6" height="1.4"/><rect x="3.2" y="3" width="1.6" height="1.4"/><rect x="5.4" y="3" width="1.6" height="1.4"/><rect x="7.6" y="3" width="1.4" height="1.4"/><rect x="1" y="5.2" width="1.6" height="1.4"/><rect x="3.2" y="5.2" width="1.6" height="1.4"/><rect x="5.4" y="5.2" width="1.6" height="1.4"/><rect x="7.6" y="5.2" width="1.4" height="1.4"/><rect x="1" y="7.4" width="1.6" height="1.4"/><rect x="3.2" y="7.4" width="1.6" height="1.4"/><rect x="5.4" y="7.4" width="1.6" height="1.4"/><rect x="7.6" y="7.4" width="1.4" height="1.4"/></g></svg>
<div class="t" style="left:338.5px;top:452px;height:24px;line-height:24px;font-size:12px;color:#333;letter-spacing:0.103px;">01/08/2022</div>
<div class="t" style="left:461.5px;top:452px;height:24px;line-height:24px;font-size:14px;color:#333;letter-spacing:-0.131px;">Periodo:</div>
<div class="tf" style="left:513px;top:451px;width:60px;height:25px;"></div>
<div class="t" style="left:520px;top:452px;height:24px;line-height:24px;font-size:12px;color:#333;letter-spacing:-0.205px;">202208</div>
<div class="t" style="left:888.5px;top:452px;height:24px;line-height:24px;font-size:14px;color:#333;letter-spacing:-0.445px;">Estado:</div>
<div class="btn" style="left:933px;top:451px;width:150px;height:25px;"></div>
<div class="t" style="left:941px;top:451.8px;height:24px;line-height:24px;font-size:12px;color:#333;letter-spacing:0.003px;">10-Actualizado</div>
<svg class="a" style="left:1067.5px;top:462px" width="8" height="4" viewBox="0 0 8 4"><path d="M0 0 H8 L4.0 4 Z" fill="#333"/></svg>
<div class="t" style="left:223.5px;top:482px;height:24px;line-height:24px;font-size:14px;color:#333;letter-spacing:-0.139px;">Tipo Asistencia:</div>
<div class="btn" style="left:319px;top:481px;width:150px;height:25px;"></div>
<div class="t" style="left:327px;top:481.8px;height:24px;line-height:24px;font-size:12px;color:#333;letter-spacing:-0.038px;">0-Laborable</div>
<svg class="a" style="left:453.5px;top:492px" width="8" height="4" viewBox="0 0 8 4"><path d="M0 0 H8 L4.0 4 Z" fill="#333"/></svg>
<div class="t" style="left:489.5px;top:482px;height:24px;line-height:24px;font-size:14px;color:#333;letter-spacing:-0.256px;">Planilla Remuneraciones:</div>
<div class="tf" style="left:642px;top:481px;width:80px;height:25px;"></div>
<div class="tf" style="left:723px;top:481px;width:29px;height:25px;"></div>
<div class="t" style="left:730px;top:482px;height:24px;line-height:24px;font-size:12px;color:#333;letter-spacing:-0.205px;">0</div>
<div style="left:213px;top:514px;width:845px;height:29px;background:linear-gradient(#cccccc,#d6d6d6 3px,#dddddd 8px,#dddddd);border-bottom:1px solid #b8b8b8;"></div>
<div style="left:218px;top:519px;width:85px;height:24px;background:#f4f4f4;border:1px solid #2aa0d8;border-bottom:none;border-radius:3px 3px 0 0;box-shadow:inset 1px 1px 0 #9bd4ee, inset -1px 0 0 #9bd4ee;"></div>
<div class="t" style="left:218px;top:521px;height:23px;line-height:23px;font-size:12px;color:#333;letter-spacing:-0.200px;width:85px;text-align:center;">Asistencia Dia</div>
<div style="left:305px;top:519px;width:88px;height:23px;background:linear-gradient(#f2f2f2,#dcdcdc);border:1px solid #b4b4b4;border-bottom:none;border-radius:3px 3px 0 0;box-shadow:inset 0 1px 0 #fff;"></div>
<div class="t" style="left:305px;top:521px;height:22px;line-height:22px;font-size:12px;color:#333;letter-spacing:-0.059px;width:88px;text-align:center;">Autorizaciones</div>
<div style="left:395px;top:519px;width:228px;height:23px;background:linear-gradient(#f2f2f2,#dcdcdc);border:1px solid #b4b4b4;border-bottom:none;border-radius:3px 3px 0 0;box-shadow:inset 0 1px 0 #fff;"></div>
<div class="t" style="left:395px;top:521px;height:22px;line-height:22px;font-size:12px;color:#333;letter-spacing:0.036px;width:228px;text-align:center;">Informacion Complementaria y Utilitarios</div>
<div style="left:625px;top:519px;width:62px;height:23px;background:linear-gradient(#f2f2f2,#dcdcdc);border:1px solid #b4b4b4;border-bottom:none;border-radius:3px 3px 0 0;box-shadow:inset 0 1px 0 #fff;"></div>
<div class="t" style="left:625px;top:521px;height:22px;line-height:22px;font-size:12px;color:#333;letter-spacing:-0.228px;width:62px;text-align:center;">Consultas</div>
<div class="t" style="left:223.5px;top:549px;height:24px;line-height:24px;font-size:14px;color:#333;letter-spacing:-0.021px;">Horario:</div>
<div class="tf" style="left:273.5px;top:548px;width:79px;height:25px;"></div>
<div class="t" style="left:280.5px;top:549px;height:24px;line-height:24px;font-size:12px;color:#333;letter-spacing:0.060px;">HN01-1</div>
<div class="btn" style="left:353px;top:548px;width:24.5px;height:25px;background:#fff;"></div>
<svg class="a" style="left:353px;top:548px" width="25" height="25" viewBox="0 0 25 25"><ellipse cx="11" cy="10.500" rx="4.400" ry="4.100" fill="none" stroke="#1ea53a" stroke-width="1.500"/><path d="M14.300 13.600 L16.700 15.800" stroke="#1ea53a" stroke-width="2.200" stroke-linecap="round"/></svg>
<div class="tf" style="left:378.5px;top:548px;width:49.5px;height:25px;"></div>
<div class="t" style="left:385.5px;top:549px;height:24px;line-height:24px;font-size:12px;color:#333;letter-spacing:-0.381px;">8.0</div>
<div class="t" style="left:438.5px;top:549px;height:24px;line-height:24px;font-size:14px;color:#333;letter-spacing:-0.108px;">Refrigerio:</div>
<div class="tf" style="left:502px;top:548px;width:50px;height:25px;"></div>
<div class="t" style="left:509px;top:549px;height:24px;line-height:24px;font-size:12px;color:#333;letter-spacing:-0.381px;">1.0</div>
<div class="t" style="left:572.5px;top:549px;height:24px;line-height:24px;font-size:14px;color:#333;letter-spacing:-0.425px;">Local:</div>
<div class="tf" style="left:607px;top:548px;width:80px;height:25px;"></div>
<div class="t" style="left:223.5px;top:579px;height:24px;line-height:24px;font-size:14px;color:#333;letter-spacing:-0.308px;">Asistencia:</div>
<div class="tf" style="left:288px;top:578px;width:50px;height:25px;"></div>
<div class="t" style="left:295px;top:579px;height:24px;line-height:24px;font-size:12px;color:#333;letter-spacing:-0.337px;">8.92</div>
<div class="t" style="left:348.5px;top:579px;height:24px;line-height:24px;font-size:14px;color:#333;letter-spacing:-0.319px;">Remunerada:</div>
<div class="tf" style="left:430px;top:578px;width:50px;height:25px;"></div>
<div class="t" style="left:437px;top:579px;height:24px;line-height:24px;font-size:12px;color:#333;letter-spacing:-0.337px;">8.92</div>
<div class="t" style="left:491px;top:579px;height:24px;line-height:24px;font-size:14px;color:#333;letter-spacing:0.007px;">Nocturna:</div>
<div class="tf" style="left:551px;top:578px;width:50px;height:25px;"></div>
<div class="t" style="left:558px;top:579px;height:24px;line-height:24px;font-size:12px;color:#333;letter-spacing:-0.381px;">0.0</div>
<div class="t" style="left:611.5px;top:579px;height:24px;line-height:24px;font-size:14px;color:#333;letter-spacing:-0.108px;">Refrigerio:</div>
<div class="tf" style="left:675px;top:578px;width:50px;height:25px;"></div>
<div class="t" style="left:682px;top:579px;height:24px;line-height:24px;font-size:12px;color:#333;letter-spacing:-0.337px;">1.03</div>
<div class="t" style="left:736px;top:579px;height:24px;line-height:24px;font-size:14px;color:#333;letter-spacing:-0.265px;">Tardanza:</div>
<div class="tf" style="left:795px;top:578px;width:50px;height:25px;"></div>
<div class="t" style="left:802px;top:579px;height:24px;line-height:24px;font-size:12px;color:#333;letter-spacing:-0.337px;">0.08</div>
<div class="t" style="left:856px;top:579px;height:24px;line-height:24px;font-size:14px;color:#333;letter-spacing:-0.312px;">Turno Especial:</div>
<div class="tf" style="left:948px;top:578px;width:50px;height:25px;"></div>
<div class="t" style="left:955px;top:579px;height:24px;line-height:24px;font-size:12px;color:#333;letter-spacing:-0.381px;">0.0</div>
<div style="left:213px;top:618px;width:200px;height:249px;background:#c0c0c0;"></div>
<div style="left:413px;top:618px;width:1px;height:249px;background:#cbcbcb;"></div>
<div style="left:413px;top:618px;width:184px;height:1px;background:#cbcbcb;"></div>
<div class="t" style="left:214px;top:617px;height:22px;line-height:22px;font-size:14px;color:#333;letter-spacing:-0.402px;width:184px;text-align:center;">Horas Extras</div>
<div class="t" style="left:223.5px;top:644px;height:24px;line-height:24px;font-size:14px;color:#333;letter-spacing:-0.308px;">Asistencia:</div>
<div class="tf" style="left:288px;top:643px;width:50px;height:25px;border-color:#c0c0c0;box-shadow:none;"></div>
<div class="t" style="left:295px;top:644px;height:24px;line-height:24px;font-size:12px;color:#333;letter-spacing:-0.337px;">0.84</div>
<div class="t" style="left:223.5px;top:674px;height:24px;line-height:24px;font-size:14px;color:#333;letter-spacing:-0.156px;">Autorizadas:</div>
<div class="tf" style="left:299px;top:673px;width:50px;height:25px;border-color:#c0c0c0;box-shadow:none;"></div>
<div class="t" style="left:306px;top:674px;height:24px;line-height:24px;font-size:12px;color:#333;letter-spacing:-0.337px;">0.84</div>
<div class="t" style="left:223.5px;top:704px;height:24px;line-height:24px;font-size:14px;color:#333;letter-spacing:-0.261px;">Simple:</div>
<div class="tf" style="left:268px;top:703px;width:50px;height:25px;border-color:#c0c0c0;box-shadow:none;"></div>
<div class="t" style="left:275px;top:704px;height:24px;line-height:24px;font-size:12px;color:#333;letter-spacing:-0.337px;">0.84</div>
<div class="t" style="left:328px;top:704px;height:24px;line-height:24px;font-size:14px;color:#333;letter-spacing:-0.574px;">D:</div>
<div class="tf" style="left:341px;top:703px;width:50px;height:25px;border-color:#c0c0c0;box-shadow:none;"></div>
<div class="t" style="left:348px;top:704px;height:24px;line-height:24px;font-size:12px;color:#333;letter-spacing:-0.337px;">0.84</div>
<div class="t" style="left:328px;top:734px;height:24px;line-height:24px;font-size:14px;color:#333;letter-spacing:-0.246px;">N:</div>
<div class="tf" style="left:341px;top:733px;width:50px;height:25px;border-color:#c0c0c0;box-shadow:none;"></div>
<div class="t" style="left:348px;top:734px;height:24px;line-height:24px;font-size:12px;color:#333;letter-spacing:-0.381px;">0.0</div>
<div class="t" style="left:223.5px;top:764px;height:24px;line-height:24px;font-size:14px;color:#333;letter-spacing:-0.219px;">Dobles:</div>
<div class="tf" style="left:269px;top:763px;width:50px;height:25px;border-color:#c0c0c0;box-shadow:none;"></div>
<div class="t" style="left:276px;top:764px;height:24px;line-height:24px;font-size:12px;color:#333;letter-spacing:-0.381px;">0.0</div>
<div class="t" style="left:328px;top:764px;height:24px;line-height:24px;font-size:14px;color:#333;letter-spacing:-0.574px;">D:</div>
<div class="tf" style="left:340px;top:763px;width:50px;height:25px;border-color:#c0c0c0;box-shadow:none;"></div>
<div class="t" style="left:347px;top:764px;height:24px;line-height:24px;font-size:12px;color:#333;letter-spacing:-0.381px;">0.0</div>
<div class="t" style="left:328px;top:794px;height:24px;line-height:24px;font-size:14px;color:#333;letter-spacing:-0.246px;">N:</div>
<div class="tf" style="left:341px;top:793px;width:50px;height:25px;border-color:#c0c0c0;box-shadow:none;"></div>
<div class="t" style="left:348px;top:794px;height:24px;line-height:24px;font-size:12px;color:#333;letter-spacing:-0.381px;">0.0</div>
<div class="t" style="left:223.5px;top:824px;height:24px;line-height:24px;font-size:14px;color:#333;letter-spacing:-0.202px;">Ajuste:</div>
<div class="tf" style="left:265px;top:823px;width:50px;height:25px;border-color:#c0c0c0;box-shadow:none;"></div>
<div class="t" style="left:413px;top:618px;height:22px;line-height:22px;font-size:14px;color:#333;letter-spacing:-0.404px;width:178px;text-align:center;">Permisos:</div>
<div class="t" style="left:424.5px;top:645px;height:24px;line-height:24px;font-size:14px;color:#333;letter-spacing:-0.291px;">Remunerados:</div>
<div class="tf" style="left:513px;top:644px;width:50px;height:25px;"></div>
<div class="t" style="left:520px;top:645px;height:24px;line-height:24px;font-size:12px;color:#333;letter-spacing:-0.381px;">0.0</div>
<div class="t" style="left:424.5px;top:675px;height:24px;line-height:24px;font-size:14px;color:#333;letter-spacing:-0.194px;">NoRemunerados:</div>
<div class="tf" style="left:532.5px;top:674px;width:49.5px;height:25px;"></div>
<div class="t" style="left:539.5px;top:675px;height:24px;line-height:24px;font-size:12px;color:#333;letter-spacing:-0.381px;">0.0</div>
<div class="t" style="left:424.5px;top:705px;height:24px;line-height:24px;font-size:14px;color:#333;letter-spacing:-0.654px;">Canje H.E.:</div>
<div class="tf" style="left:489px;top:704px;width:49.5px;height:25px;"></div>
<div class="t" style="left:496px;top:705px;height:24px;line-height:24px;font-size:12px;color:#333;letter-spacing:-0.381px;">0.0</div>
<div style="left:596.5px;top:618px;width:280px;height:249px;background:#fff;border:1px solid #c4c4c4;border-bottom:none;"></div>
<div style="left:597px;top:618px;width:279px;height:24.5px;background:linear-gradient(#eeeeee,#dbdbdb);border-bottom:1px solid #c6c6c6;"></div>
<div class="hdr" style="left:597px;top:618px;width:36.5px;height:24.5px;"></div>
<div class="t" style="left:597px;top:619px;height:24.5px;line-height:24.5px;font-size:14px;color:#222;letter-spacing:-0.422px;font-weight:bold;width:36.5px;text-align:center;">Li...</div>
<div class="hdr" style="left:633.5px;top:618px;width:80px;height:24.5px;"></div>
<div class="t" style="left:633.5px;top:619px;height:24.5px;line-height:24.5px;font-size:14px;color:#222;letter-spacing:-0.480px;font-weight:bold;width:80px;text-align:center;">Fecha</div>
<div class="hdr" style="left:713.5px;top:618px;width:50px;height:24.5px;"></div>
<div class="t" style="left:713.5px;top:619px;height:24.5px;line-height:24.5px;font-size:14px;color:#222;letter-spacing:0.080px;font-weight:bold;width:50px;text-align:center;">Hora</div>
<div class="hdr" style="left:763.5px;top:618px;width:110px;height:24.5px;"></div>
<div class="t" style="left:763.5px;top:619px;height:24.5px;line-height:24.5px;font-size:14px;color:#222;letter-spacing:-0.107px;font-weight:bold;width:110px;text-align:center;">Operacion</div>
<div style="left:597px;top:642.5px;width:278px;height:24px;background:#fff;border-bottom:1px solid #ececec;"></div>
<div class="t" style="left:601px;top:642.5px;height:24px;line-height:24px;font-size:12px;color:#333;letter-spacing:-0.205px;">1</div>
<div class="t" style="left:637.5px;top:642.5px;height:24px;line-height:24px;font-size:12px;color:#333;letter-spacing:-0.090px;">01/08/2022...</div>
<div class="t" style="left:717.5px;top:642.5px;height:24px;line-height:24px;font-size:12px;color:#333;letter-spacing:-0.310px;">07:05</div>
<div class="t" style="left:767.5px;top:642.5px;height:24px;line-height:24px;font-size:12px;color:#333;letter-spacing:-0.039px;">0-TerminalCA</div>
<div style="left:597px;top:666.5px;width:278px;height:24px;background:#f9f9f9;border-bottom:1px solid #ececec;"></div>
<div class="t" style="left:601px;top:666.5px;height:24px;line-height:24px;font-size:12px;color:#333;letter-spacing:-0.205px;">2</div>
<div class="t" style="left:637.5px;top:666.5px;height:24px;line-height:24px;font-size:12px;color:#333;letter-spacing:-0.090px;">01/08/2022...</div>
<div class="t" style="left:717.5px;top:666.5px;height:24px;line-height:24px;font-size:12px;color:#333;letter-spacing:-0.132px;">11:00</div>
<div class="t" style="left:767.5px;top:666.5px;height:24px;line-height:24px;font-size:12px;color:#333;letter-spacing:-0.039px;">0-TerminalCA</div>
<div style="left:597px;top:690.5px;width:278px;height:24px;background:#fff;border-bottom:1px solid #ececec;"></div>
<div class="t" style="left:601px;top:690.5px;height:24px;line-height:24px;font-size:12px;color:#333;letter-spacing:-0.205px;">3</div>
<div class="t" style="left:637.5px;top:690.5px;height:24px;line-height:24px;font-size:12px;color:#333;letter-spacing:-0.090px;">01/08/2022...</div>
<div class="t" style="left:717.5px;top:690.5px;height:24px;line-height:24px;font-size:12px;color:#333;letter-spacing:-0.310px;">12:02</div>
<div class="t" style="left:767.5px;top:690.5px;height:24px;line-height:24px;font-size:12px;color:#333;letter-spacing:-0.039px;">0-TerminalCA</div>
<div style="left:597px;top:714.5px;width:278px;height:24px;background:#f9f9f9;border-bottom:1px solid #ececec;"></div>
<div class="t" style="left:601px;top:714.5px;height:24px;line-height:24px;font-size:12px;color:#333;letter-spacing:-0.205px;">4</div>
<div class="t" style="left:637.5px;top:714.5px;height:24px;line-height:24px;font-size:12px;color:#333;letter-spacing:-0.090px;">01/08/2022...</div>
<div class="t" style="left:717.5px;top:714.5px;height:24px;line-height:24px;font-size:12px;color:#333;letter-spacing:-0.310px;">16:57</div>
<div class="t" style="left:767.5px;top:714.5px;height:24px;line-height:24px;font-size:12px;color:#333;letter-spacing:-0.039px;">0-TerminalCA</div>
<div style="left:597px;top:738.5px;width:278px;height:24px;background:#fff;border-bottom:1px solid #ececec;"></div>
<div style="left:597px;top:762.5px;width:278px;height:24px;background:#f9f9f9;border-bottom:1px solid #ececec;"></div>
<div style="left:597px;top:786.5px;width:278px;height:24px;background:#fff;border-bottom:1px solid #ececec;"></div>
<div style="left:597px;top:810.5px;width:278px;height:24px;background:#f9f9f9;border-bottom:1px solid #ececec;"></div>
<div style="left:597px;top:834.5px;width:278px;height:24px;background:#fff;border-bottom:1px solid #ececec;"></div>
<div style="left:597px;top:858.5px;width:278px;height:7.5px;background:#f9f9f9;border-bottom:1px solid #ececec;"></div>
<div style="left:633px;top:642.5px;width:1px;height:224px;background:#ececec;"></div>
<div style="left:713px;top:642.5px;width:1px;height:224px;background:#ececec;"></div>
<div style="left:763px;top:642.5px;width:1px;height:224px;background:#ececec;"></div>
<div style="left:873px;top:642.5px;width:1px;height:224px;background:#ececec;"></div>
<div style="left:596.5px;top:618px;width:1px;height:249px;background:#c4c4c4;"></div>
<div style="left:876.5px;top:618px;width:180.5px;height:249px;background:#d3d3d3;"></div>
<div class="t" style="left:887.5px;top:617.5px;height:22px;line-height:22px;font-size:14px;color:#333;letter-spacing:-0.235px;">Marcaciones:</div>
<div class="t" style="left:887.5px;top:649px;height:24px;line-height:24px;font-size:14px;color:#333;letter-spacing:-0.683px;">Fecha:</div>
<div class="tf" style="left:925.5px;top:648px;width:96.5px;height:25px;border-radius:3px 0 0 3px;border-color:#d3d3d3;box-shadow:none;"></div>
<div class="btn" style="left:1021.5px;top:648px;width:24.5px;height:25px;border-radius:0 3px 3px 0;"></div>
<svg class="a" style="left:1028.5px;top:655.5px" width="10" height="10" viewBox="0 0 10 10"><rect x="0" y="0" width="10" height="10" fill="#555"/><g fill="#d8d8d8"><rect x="1" y="3" width="1.6" height="1.4"/><rect x="3.2" y="3" width="1.6" height="1.4"/><rect x="5.4" y="3" width="1.6" height="1.4"/><rect x="7.6" y="3" width="1.4" height="1.4"/><rect x="1" y="5.2" width="1.6" height="1.4"/><rect x="3.2" y="5.2" width="1.6" height="1.4"/><rect x="5.4" y="5.2" width="1.6" height="1.4"/><rect x="7.6" y="5.2" width="1.4" height="1.4"/><rect x="1" y="7.4" width="1.6" height="1.4"/><rect x="3.2" y="7.4" width="1.6" height="1.4"/><rect x="5.4" y="7.4" width="1.6" height="1.4"/><rect x="7.6" y="7.4" width="1.4" height="1.4"/></g></svg>
<div class="t" style="left:887.5px;top:684px;height:24px;line-height:24px;font-size:14px;color:#333;letter-spacing:-0.213px;">Hora:</div>
<div class="tf" style="left:921px;top:683px;width:50px;height:25px;border-color:#d3d3d3;box-shadow:none;"></div>
<div class="t" style="left:887.5px;top:719px;height:24px;line-height:24px;font-size:14px;color:#333;letter-spacing:-0.425px;">Local:</div>
<div class="tf" style="left:921.5px;top:718px;width:81px;height:25px;border-color:#d3d3d3;box-shadow:none;"></div>
<div class="btn" style="left:1002.5px;top:718px;width:24px;height:25px;background:#fff;"></div>
<svg class="a" style="left:1002.5px;top:718px" width="25" height="25" viewBox="0 0 25 25"><ellipse cx="11" cy="10.500" rx="4.400" ry="4.100" fill="none" stroke="#1ea53a" stroke-width="1.500"/><path d="M14.300 13.600 L16.700 15.800" stroke="#1ea53a" stroke-width="2.200" stroke-linecap="round"/></svg>
<div class="btn" style="left:912.5px;top:773px;width:115px;height:25px;"></div>
<div class="t" style="left:912.5px;top:773px;height:24px;line-height:24px;font-size:12px;color:#333;letter-spacing:-0.049px;width:115px;text-align:center;">Aceptar Marcacion</div>
<div style="left:1058px;top:514px;width:60px;height:353px;background:#1a4a7e;"></div>
<div style="left:1063px;top:524px;width:50px;height:50.5px;border-radius:4px;background:linear-gradient(#f3f3f3,#e4e4e4 50%,#dadada);border:1px solid #c6c6c6;border-top-color:#fafafa;border-bottom-color:#b4b4b4;"></div>
<div style="left:1063px;top:579px;width:50px;height:50.5px;border-radius:4px;background:linear-gradient(#f3f3f3,#e4e4e4 50%,#dadada);border:1px solid #c6c6c6;border-top-color:#fafafa;border-bottom-color:#b4b4b4;"></div>
<div style="left:1063px;top:634px;width:50px;height:50.5px;border-radius:4px;background:linear-gradient(#f3f3f3,#e4e4e4 50%,#dadada);border:1px solid #c6c6c6;border-top-color:#fafafa;border-bottom-color:#b4b4b4;"></div>
<div style="left:1063px;top:689px;width:50px;height:50.5px;border-radius:4px;background:linear-gradient(#f3f3f3,#e4e4e4 50%,#dadada);border:1px solid #c6c6c6;border-top-color:#fafafa;border-bottom-color:#b4b4b4;"></div>
<div style="left:1063px;top:744px;width:50px;height:50.5px;border-radius:4px;background:linear-gradient(#f3f3f3,#e4e4e4 50%,#dadada);border:1px solid #c6c6c6;border-top-color:#fafafa;border-bottom-color:#b4b4b4;"></div>
<div style="left:1063px;top:799px;width:50px;height:50.5px;border-radius:4px;background:linear-gradient(#f3f3f3,#e4e4e4 50%,#dadada);border:1px solid #c6c6c6;border-top-color:#fafafa;border-bottom-color:#b4b4b4;"></div>
<svg class="a" style="left:1063.200px;top:524px" width="50" height="50" viewBox="0 0 50 50"><defs><clipPath id="cs"><rect x="5.800" y="5.900" width="38.200" height="38" rx="6"/></clipPath></defs><rect x="5.800" y="5.900" width="38.200" height="38" fill="#fff"/><rect x="5.800" y="5.900" width="38.200" height="38" rx="6" fill="#05a95f"/><g clip-path="url(#cs)"><path d="M35.900 14.400 L50 28.500 V50 H30 L13 36.500 H35.900 Z" fill="#06985a"/></g><path d="M12.800 12.400 H33.500 L35.900 14.400 V36.800 H12.800 Z" fill="#fff"/><rect x="19.200" y="12.400" width="11" height="8.700" fill="#05a95f"/><rect x="25.500" y="15.100" width="4.700" height="6" fill="#eee"/><rect x="17.500" y="26.100" width="13.700" height="7.700" fill="#04995a"/></svg>
<svg class="a" style="left:1063.200px;top:579px" width="50" height="50" viewBox="0 0 50 50"><path d="M4.800 23.200 L19.900 8.200 V16.500 C28 17.500 36 22 40.500 29 C43 33 44 37 44.600 40.600 C42 36.500 38 33.500 33 31.500 C28 29.800 24 29.500 19.900 29.900 V38.900 Z" fill="#000"/></svg>
<svg class="a" style="left:1063.200px;top:634px" width="50" height="50" viewBox="0 0 50 50"><g fill="#fff" stroke="#ed2c35"><path d="M17.500 12 C17.500 4.800 31.300 4.800 31.300 12" stroke-width="3.300"/><path d="M11.300 16.500 V40.300 a3 3 0 0 0 3 3 H35.100 a3 3 0 0 0 3 -3 V16.500" stroke-width="3"/></g><rect x="6.500" y="11.400" width="36.400" height="5.600" rx="1.600" fill="#ed2c35"/><g fill="#ed2c35"><rect x="16.900" y="19" width="2.800" height="18.800"/><rect x="23.500" y="19" width="2.800" height="18.800"/><rect x="30.500" y="19" width="2.800" height="18.800"/></g></svg>
<svg class="a" style="left:1063.200px;top:689px" width="50" height="50" viewBox="0 0 50 50"><rect x="4.800" y="4.900" width="40" height="40" fill="#fff"/><g fill="none" stroke="#000" stroke-linejoin="round" stroke-linecap="round"><rect x="8.850" y="13.050" width="32.100" height="30.100" rx="4.500" stroke-width="3.300" fill="#fff"/><path d="M8.850 21 C8.850 26.400 11 26.400 14 26.400 H35.800 C38.800 26.400 40.950 26.400 40.950 21" stroke-width="3"/><rect x="15.150" y="6.650" width="19.100" height="15.100" rx=".8" stroke-width="3.300" fill="#fff"/><path d="M20.300 12.500 H29.500 M20.300 16.600 H29.500" stroke-width="1.500"/><path d="M17.500 35.500 H32.300" stroke-width="1.900"/></g></svg>
<svg class="a" style="left:1063.200px;top:744px" width="50" height="50" viewBox="0 0 50 50"><defs><clipPath id="cr"><circle cx="24.800" cy="25" r="20"/></clipPath></defs><circle cx="24.800" cy="25" r="20" fill="#035c90"/><g clip-path="url(#cr)"><path d="M26.800 11.800 L52 37 V52 H32.500 L16.500 34 L19 27 L25 22 Z" fill="#014a74"/></g><path d="M14.800 26.400 A10.150 10.150 0 1 0 24.900 16.300" fill="none" stroke="#ebebeb" stroke-width="3.300" stroke-linecap="round"/><path d="M21.500 16.700 L26.900 11.400 V21.900 Z" fill="#ebebeb" stroke="#ebebeb" stroke-width=".8" stroke-linejoin="round"/></svg>
<svg class="a" style="left:1063.200px;top:799px" width="50" height="50" viewBox="0 0 50 50"><rect x="21.200" y="6" width="7" height="37.800" rx=".8" fill="#ec1c24"/><rect x="5.800" y="21.700" width="37.800" height="6.400" rx=".8" fill="#ec1c24"/></svg>
<div style="left:1118px;top:380px;width:1px;height:487px;background:#6a6a6a;"></div>
<div style="left:212px;top:865.3px;width:907px;height:1.7px;background:#3c3c3c;"></div>
</body></html>
